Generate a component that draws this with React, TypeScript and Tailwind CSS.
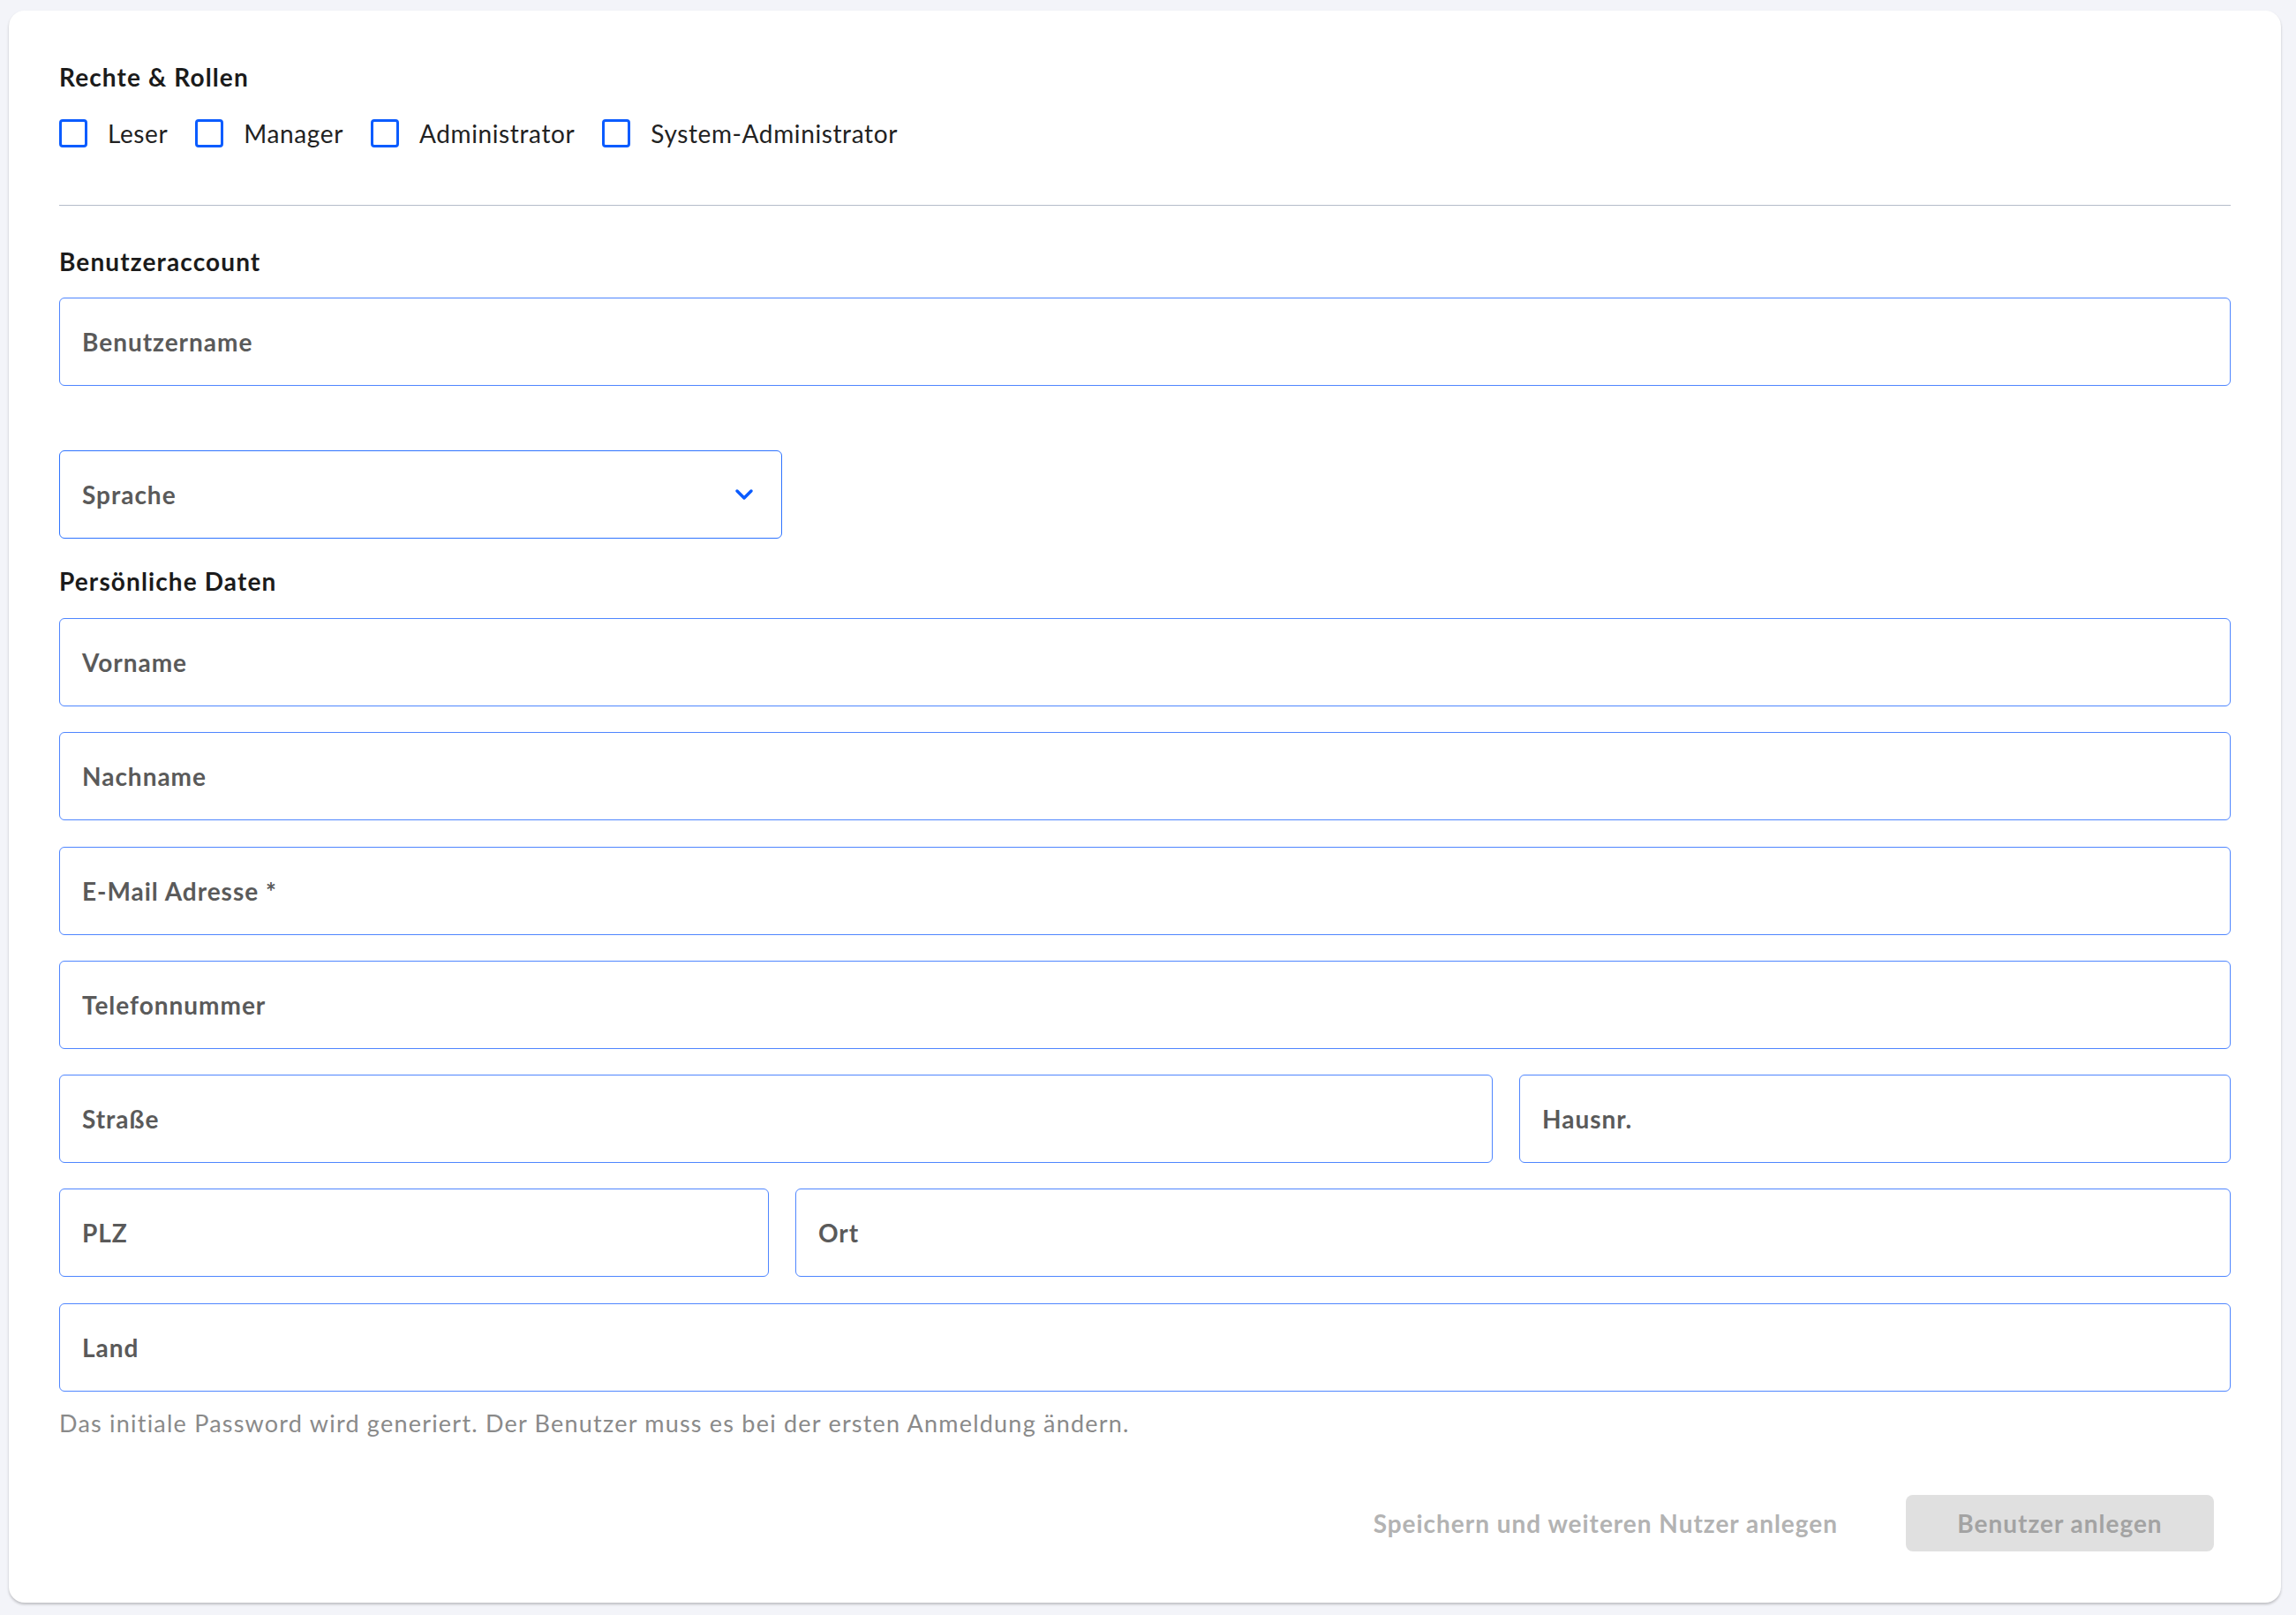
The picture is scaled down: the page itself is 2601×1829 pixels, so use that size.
import React from "react";

const roles = ["Leser", "Manager", "Administrator", "System-Administrator"];

function Field({ label, className = "" }: { label: string; className?: string }) {
  return (
    <div
      className={
        "flex h-[100px] items-center rounded-[6px] border-[1.5px] border-[#4f86ff] bg-white px-[25px] " +
        className
      }
    >
      <span className="text-[28px] font-bold tracking-[0.035em] text-[#5a5a5a]">{label}</span>
    </div>
  );
}

function Heading({ children, className = "" }: { children: React.ReactNode; className?: string }) {
  return (
    <h2 className={"text-[28px] font-bold leading-[34px] tracking-[0.04em] text-[#1b1b1b] " + className}>
      {children}
    </h2>
  );
}

export default function App() {
  return (
    <div
      className="min-h-screen bg-[#f3f4f9] pl-[10px] pr-[17px] pt-[12px] pb-[13px]"
      style={{ fontFamily: "Lato, 'Noto Sans', sans-serif" }}
    >
      <div className="flex flex-col rounded-[18px] bg-white px-[57px] pt-[58px] pb-[58px] shadow-[0_2px_3px_rgba(0,0,0,0.22)]">
        <Heading>Rechte &amp; Rollen</Heading>

        <div className="mt-[30px] flex h-[34px] items-center">
          {roles.map((r) => (
            <label key={r} className="mr-[31px] flex items-center gap-[23px]">
              <span className="h-[32px] w-[32px] rounded-[4px] border-[3px] border-[#0b5cff]" />
              <span className="text-[28px] leading-[34px] tracking-[0.022em] text-[#222]">{r}</span>
            </label>
          ))}
        </div>

        <div className="mt-[64px] border-t-[1.5px] border-[#b4bbc9]" />

        <Heading className="mt-[46px]">Benutzeraccount</Heading>
        <Field label="Benutzername" className="mt-[24px]" />

        <div className="mt-[73px] flex h-[100px] w-[819px] items-center justify-between rounded-[6px] border-[1.5px] border-[#2f74ff] px-[25px]">
          <span className="text-[28px] font-bold tracking-[0.035em] text-[#5a5a5a]">Sprache</span>
          <svg width="22" height="14" viewBox="0 0 22 14" className="mr-[6px]">
            <path d="M3 3 L11 11 L19 3" fill="none" stroke="#0b5cff" strokeWidth="3.5" strokeLinecap="round" strokeLinejoin="round" />
          </svg>
        </div>

        <Heading className="mt-[31px]">Persönliche Daten</Heading>

        <div className="mt-[25px] flex flex-col gap-[29.3px]">
          <Field label="Vorname" />
          <Field label="Nachname" />
          <Field label="E-Mail Adresse *" />
          <Field label="Telefonnummer" />
          <div className="grid grid-cols-[1624fr_806fr] gap-[30px]">
            <Field label="Straße" />
            <Field label="Hausnr." />
          </div>
          <div className="grid grid-cols-[804fr_1626fr] gap-[30px]">
            <Field label="PLZ" />
            <Field label="Ort" />
          </div>
          <Field label="Land" />
        </div>

        <p className="mt-[19px] text-[27px] leading-[34px] tracking-[0.045em] text-[#8a8a8a]">
          Das initiale Password wird generiert. Der Benutzer muss es bei der ersten Anmeldung ändern.
        </p>

        <div className="mt-[64px] mr-[19px] flex items-center justify-end gap-[77px]">
          <button className="text-[28px] font-bold tracking-[0.035em] text-[#b3b3b3]">
            Speichern und weiteren Nutzer anlegen
          </button>
          <button className="h-[64px] w-[349px] rounded-[8px] bg-[#e0e0e0] text-[28px] font-bold tracking-[0.035em] text-[#a3a3a3]">
            Benutzer anlegen
          </button>
        </div>
      </div>
    </div>
  );
}
